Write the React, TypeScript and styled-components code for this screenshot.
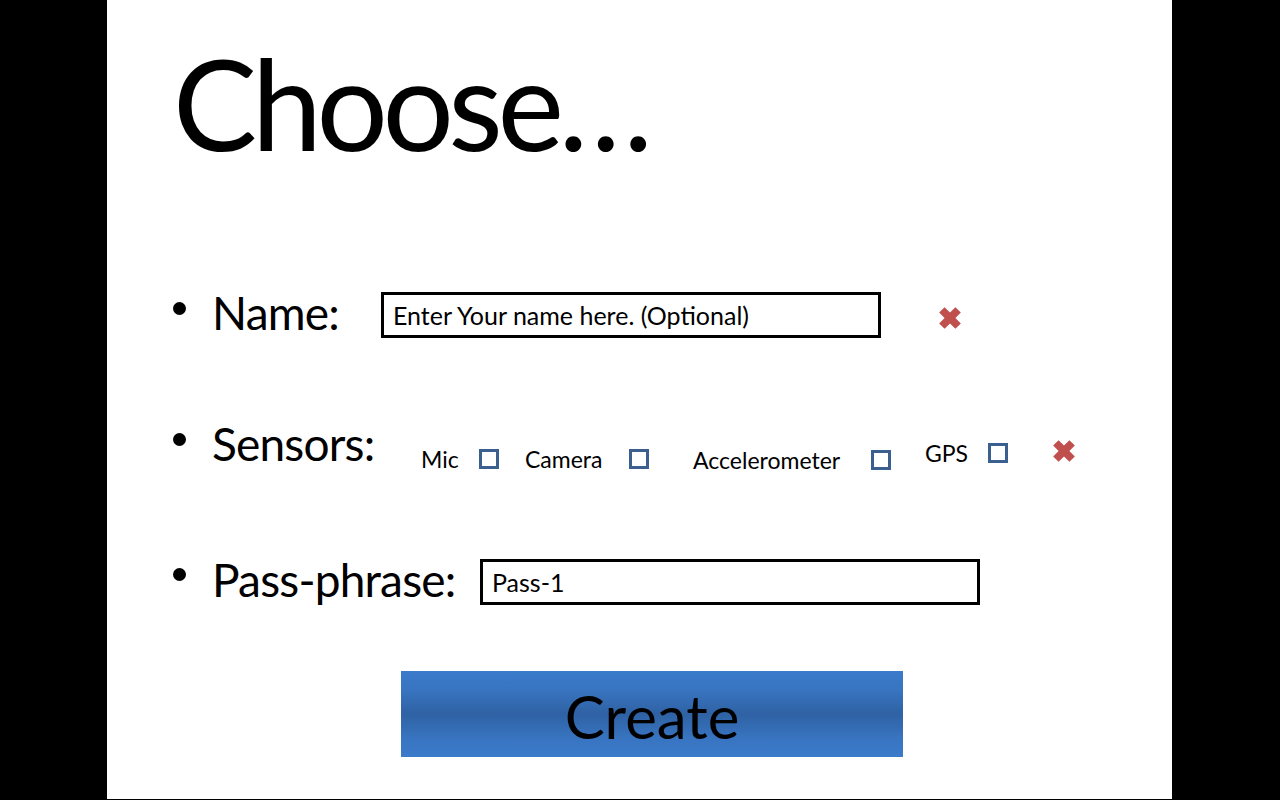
import styled, { createGlobalStyle } from "styled-components";

const GlobalStyle = createGlobalStyle`
  html, body {
    margin: 0;
    padding: 0;
    background: #000;
  }
  body {
    font-family: Lato, "Open Sans", sans-serif;
    color: #000;
  }
`;

const Stage = styled.div`
  width: 1280px;
  height: 800px;
  background: #000;
  padding-left: 107px;
  box-sizing: border-box;
`;

const Slide = styled.div`
  width: 1065px;
  height: 799px;
  background: #fff;
  box-sizing: border-box;
  padding: 40px 0 0 66px;
  display: flex;
  flex-direction: column;
`;

const Title = styled.h1`
  margin: 0;
  font-size: 126px;
  line-height: 126px;
  font-weight: 400;
  letter-spacing: -5.5px;
`;

const Row = styled.div<{ $top: number }>`
  display: flex;
  align-items: flex-start;
  margin-top: ${(p) => p.$top}px;
`;

const Bullet = styled.span<{ $top: number }>`
  width: 13px;
  height: 13px;
  border-radius: 50%;
  background: #000;
  margin-top: ${(p) => p.$top}px;
  margin-right: 26px;
  flex-shrink: 0;
`;

const Label = styled.span<{ $width: number; $top: number }>`
  width: ${(p) => p.$width}px;
  font-size: 46px;
  line-height: 46px;
  letter-spacing: -0.8px;
  margin-top: ${(p) => p.$top}px;
  flex-shrink: 0;
  white-space: nowrap;
`;

const TextBox = styled.input`
  width: 500px;
  height: 46px;
  box-sizing: border-box;
  border: 3px solid #000;
  padding: 0 0 0 9px;
  margin: 0;
  font-family: Lato, "Open Sans", sans-serif;
  font-size: 25px;
  color: #000;
  background: #fff;
  outline: none;
`;

const RemoveIcon = styled.svg<{ $left: number; $top: number }>`
  width: 26px;
  height: 26px;
  margin-left: ${(p) => p.$left}px;
  margin-top: ${(p) => p.$top}px;
  flex-shrink: 0;
`;

const Option = styled.label<{ $left: number; $top: number }>`
  display: flex;
  align-items: center;
  margin-left: ${(p) => p.$left}px;
  margin-top: ${(p) => p.$top}px;
`;

const OptionText = styled.span<{ $width: number }>`
  width: ${(p) => p.$width}px;
  font-size: 23px;
  line-height: 22px;
  white-space: nowrap;
`;

const Box = styled.span`
  width: 20px;
  height: 20px;
  box-sizing: border-box;
  border: 3px solid #3b6090;
  flex-shrink: 0;
`;

const CreateButton = styled.button`
  width: 502px;
  height: 86px;
  margin: 66px 0 0 228px;
  border: none;
  padding: 5px 0 0;
  box-sizing: border-box;
  background: linear-gradient(
    to bottom,
    #3a7bcb 0%,
    #3874c0 22%,
    #2f62a4 50%,
    #3874c0 78%,
    #3a7bcb 100%
  );
  font-family: Lato, "Open Sans", sans-serif;
  font-size: 60px;
  line-height: 81px;
  color: #000;
  cursor: pointer;
`;

const Cross = ({ left, top }: { left: number; top: number }) => (
  <RemoveIcon $left={left} $top={top} viewBox="0 0 24 24">
    <path
      d="M2 7 L7 2 L12 7 L17 2 L22 7 L17 12 L22 17 L17 22 L12 17 L7 22 L2 17 L7 12 Z"
      fill="#c0504d"
    />
  </RemoveIcon>
);

const sensors = [
  { name: "Mic", width: 58, left: 0, top: 26 },
  { name: "Camera", width: 104, left: 26, top: 26 },
  { name: "Accelerometer", width: 178, left: 44, top: 27 },
  { name: "GPS", width: 63, left: 34, top: 20 },
];

const App = () => {
  return (
    <>
      <GlobalStyle />
      <Stage>
        <Slide>
          <Title>Choose…</Title>
          <Row $top={126}>
            <Bullet $top={10} />
            <Label $width={169} $top={-2}>
              Name:
            </Label>
            <TextBox defaultValue="Enter Your name here. (Optional)" />
            <Cross left={56} top={13} />
          </Row>
          <Row $top={84}>
            <Bullet $top={11} />
            <Label $width={209} $top={-1}>
              Sensors:
            </Label>
            {sensors.map((s) => (
              <Option key={s.name} $left={s.left} $top={s.top}>
                <OptionText $width={s.width}>{s.name}</OptionText>
                <Box />
              </Option>
            ))}
            <Cross left={43} top={16} />
          </Row>
          <Row $top={88}>
            <Bullet $top={9} />
            <Label $width={268} $top={-2}>
              Pass-phrase:
            </Label>
            <TextBox defaultValue="Pass-1" />
          </Row>
          <CreateButton>Create</CreateButton>
        </Slide>
      </Stage>
    </>
  );
};

export default App;
